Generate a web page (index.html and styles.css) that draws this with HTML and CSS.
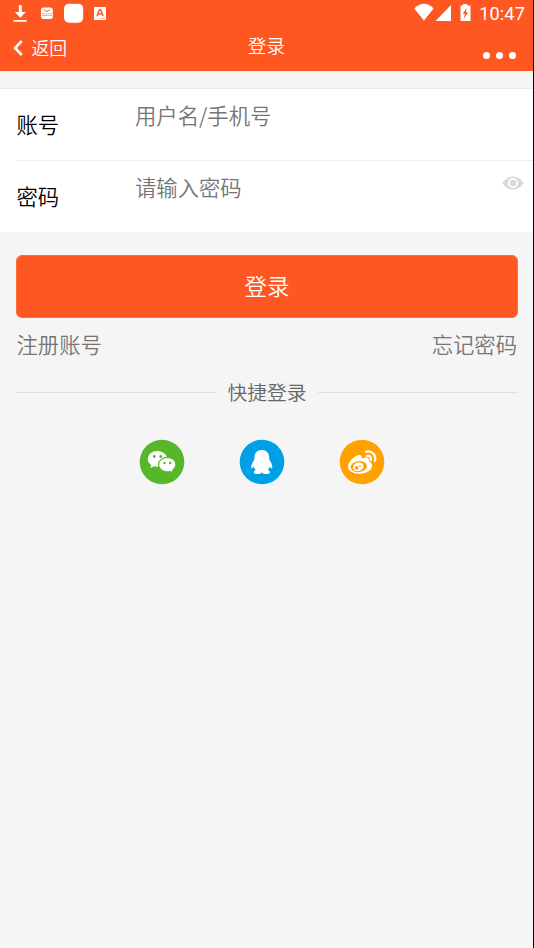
FILE: index.html
```html
<!DOCTYPE html>
<html lang="zh-CN">
<head>
<meta charset="utf-8">
<title>登录</title>
<link rel="stylesheet" href="styles.css">
</head>
<body>
<div class="screen">
  <header class="top">
    <div class="status">
      <svg class="status-left" width="120" height="27" viewBox="0 0 120 27" fill="#fff">
        <path d="M18.800 5h3v7h4L20.300 17.800 14.800 12h4zM13.500 20h13v1.800h-13z"/>
        <rect x="41" y="7.500" width="11.800" height="11.500" rx="2.500"/>
        <path d="M44 9.500q3 3.500 6 0" fill="none" stroke="#ff5722" stroke-width="1"/>
        <path d="M42 13.800h10M42 15.500h10" stroke="#ff9a78" stroke-width=".8"/>
        <rect x="64" y="3.800" width="19.200" height="19" rx="5"/>
        <rect x="94" y="7" width="12" height="13" rx=".8"/>
        <path d="M97 16.200l2.500-6.500h1.200l2.500 6.500M98.200 14h4" fill="none" stroke="#ff5722" stroke-width="1.400"/>
        <path d="M100.500 18.500h4.500" stroke="#ff9a78" stroke-width=".8"/>
      </svg>
      <div class="status-right">
        <svg width="60" height="27" viewBox="0 0 60 27" fill="#fff">
          <path d="M.2 8.500Q10-.8 19.600 8.500L10 20.500z"/>
          <path d="M37 5v16H21.500z"/>
          <path d="M46.500 5.500h2.300V4h4.400v1.500H56.500V21h-10z"/>
          <path d="M53 7.800l-4.300 6h2.200l-1 5 4.200-6.500h-2.300z" fill="#ff5722"/>
        </svg>
        <span class="time">10:47</span>
      </div>
    </div>
    <nav class="nav">
      <a class="back">
        <svg width="12" height="18" viewBox="0 0 12 18"><path d="M9.800 2L3 9l6.800 7" fill="none" stroke="#fff" stroke-width="2.600"/></svg>
        <span>返回</span>
      </a>
      <h1 class="title">登录</h1>
      <div class="more"><i></i><i></i><i></i></div>
    </nav>
  </header>
  <main>
    <section class="form">
      <div class="row">
        <label class="label">账号</label>
        <span class="field">用户名/手机号</span>
      </div>
      <div class="row divided">
        <label class="label">密码</label>
        <span class="field">请输入密码</span>
        <svg class="eye" width="22" height="14" viewBox="0 0 22 14">
          <path d="M.3 7Q4.500.5 11 .5T21.700 7Q17.500 13.500 11 13.500T.3 7z" fill="#d9d9d9"/>
          <circle cx="11" cy="7" r="4.200" fill="#d9d9d9" stroke="#fff" stroke-width="1.800"/>
        </svg>
      </div>
    </section>
    <button class="submit">登录</button>
    <div class="links"><a>注册账号</a><a>忘记密码</a></div>
    <div class="quick"><span>快捷登录</span></div>
    <div class="social">
      <svg width="46" height="46" viewBox="0 0 46 46">
        <circle cx="23" cy="23" r="22.300" fill="#56b72b"/>
        <path d="M18.500 12c-5.400 0-9.700 3.500-9.700 8 0 2.500 1.300 4.600 3.500 6.100l-1 3 3.800-1.800c1.100.3 2.200.5 3.400.5 5.400 0 9.700-3.500 9.700-7.800s-4.300-8-9.700-8z" fill="#fff"/>
        <path d="M28.300 18.300c-4.900 0-8.700 3.200-8.700 7.300s3.800 7.300 8.700 7.300c1 0 2-.2 2.900-.4l3.200 1.700-.8-2.800c2.100-1.400 3.300-3.400 3.300-5.800 0-4.100-3.800-7.300-8.600-7.300z" fill="#fff" stroke="#56b72b" stroke-width="1.200"/>
        <g fill="#56b72b"><circle cx="15.300" cy="17.500" r="1.400"/><circle cx="21.700" cy="17.500" r="1.400"/><circle cx="25.500" cy="24" r="1.200"/><circle cx="31.300" cy="24" r="1.200"/></g>
      </svg>
      <svg width="46" height="46" viewBox="0 0 46 46">
        <circle cx="23" cy="23" r="22.300" fill="#00a0e9"/>
        <path d="M22.800 11c-4.700 0-7.500 3.300-7.400 8.200l-.2 1.800c-1.800 2.500-3 5-2.900 7.200.1 1.800 1.200 1.600 2.500-.6.400 1.500 1 2.600 1.900 3.500-3.200 1.300-2.400 3.900 1.300 3.900 2.200 0 3.900-.5 4.800-1.500 1 1 2.700 1.500 4.800 1.500 3.700 0 4.500-2.600 1.300-3.900.9-.9 1.500-2 1.900-3.500 1.300 2.200 2.400 2.400 2.500.6.100-2.200-1.100-4.700-2.900-7.200l-.2-1.800c.1-4.900-2.700-8.200-7.400-8.200z" fill="#fff"/>
      </svg>
      <svg width="46" height="46" viewBox="0 0 46 46">
        <circle cx="23" cy="23" r="22.300" fill="#ffa200"/>
        <path d="M9 27.500c0-4.900 7.200-11.500 11.500-11.500 2 0 2.700 1.500 2 3.700 4.700-2 8.300-1.300 7.300 2.700 6.700 2 3.200 12.300-9.500 12.300C13.800 34.700 9 31.700 9 27.500z" fill="#fff"/>
        <ellipse cx="19.800" cy="27.600" rx="8.200" ry="5.500" transform="rotate(-8 19.800 27.600)" fill="#ffa200"/>
        <ellipse cx="19.300" cy="27.800" rx="5.400" ry="4.300" transform="rotate(-20 19.300 27.800)" fill="#fff"/>
        <circle cx="17.700" cy="28.900" r="1.900" fill="#ffa200"/><circle cx="21" cy="26.900" r=".9" fill="#ffa200"/>
        <path d="M27 12.800c6-1.600 10.700 3.600 8.800 9.200M27.800 17c3-.8 4.800 1.600 3.900 4.200" fill="none" stroke="#fff" stroke-width="2.200" stroke-linecap="round"/>
      </svg>
    </div>
  </main>
</div>
</body>
</html>
```
FILE: styles.css
```css
* { box-sizing: border-box; }
body {
  margin: 0;
  background: #f5f5f5;
  font-family: "Noto Sans CJK SC", sans-serif;
  font-weight: 350;
}
.screen {
  height: 948px;
  border-right: 1px solid #000;
  background: #f5f5f5;
  overflow: hidden;
}
.top { height: 71px; background: #ff5722; color: #fff; }
.status { display: flex; justify-content: space-between; height: 27px; }
.status-right { display: flex; gap: 5px; padding-right: 8px; }
.time { font: 400 18.200px/27px Roboto, sans-serif; letter-spacing: .1px; }
.nav {
  display: grid;
  grid-template-columns: 1fr auto 1fr;
  height: 44px;
}
.back {
  display: flex;
  align-items: center;
  gap: 7.500px;
  height: 41px;
  padding-left: 12px;
  font-size: 17.800px;
  line-height: 41px;
}
.title { margin: 0; font-size: 18.700px; font-weight: 350; line-height: 36px; }
.more { display: flex; justify-content: flex-end; gap: 5.600px; padding: 25px 17px 0 0; }
.more i { width: 7.400px; height: 7.400px; border-radius: 50%; background: #fff; }
.form {
  margin-top: 17px;
  height: 144px;
  padding-left: 16px;
  border-top: 1px solid #ececec;
  background: #fff;
}
.row { display: flex; height: 71px; font-size: 21.330px; }
.divided { height: 72px; border-top: 1px solid #eee; }
.label { width: 119px; padding-left: .5px; line-height: 69px; color: #000; }
.field { flex: 1; height: 52px; line-height: 52px; color: #757575; }
.eye { margin: 15px 9px 0 0; }
.submit {
  display: block;
  width: 502px;
  height: 63px;
  margin: 23px 0 0 16px;
  padding: 0 0 3px;
  border: 1px solid #ff6c3d;
  border-radius: 6px;
  background: #ff5722;
  color: #fff;
  font: 350 22.500px/56px "Noto Sans CJK SC", sans-serif;
}
.links {
  display: flex;
  justify-content: space-between;
  padding: 0 16px 0 16.500px;
  height: 52px;
  color: #757575;
  font-size: 21.330px;
  line-height: 52px;
}
.quick {
  display: flex;
  align-items: center;
  gap: 11px;
  height: 44px;
  margin: 0 15px 0 16px;
  color: #666;
  font-size: 19.800px;
  line-height: 43px;
}
.quick span { height: 44px; }
.quick::before, .quick::after { content: ""; flex: 1; height: 1px; background: #e0e0e0; }
.social { display: flex; justify-content: center; gap: 54px; margin-top: 25px; padding-right: 10px; }
```
